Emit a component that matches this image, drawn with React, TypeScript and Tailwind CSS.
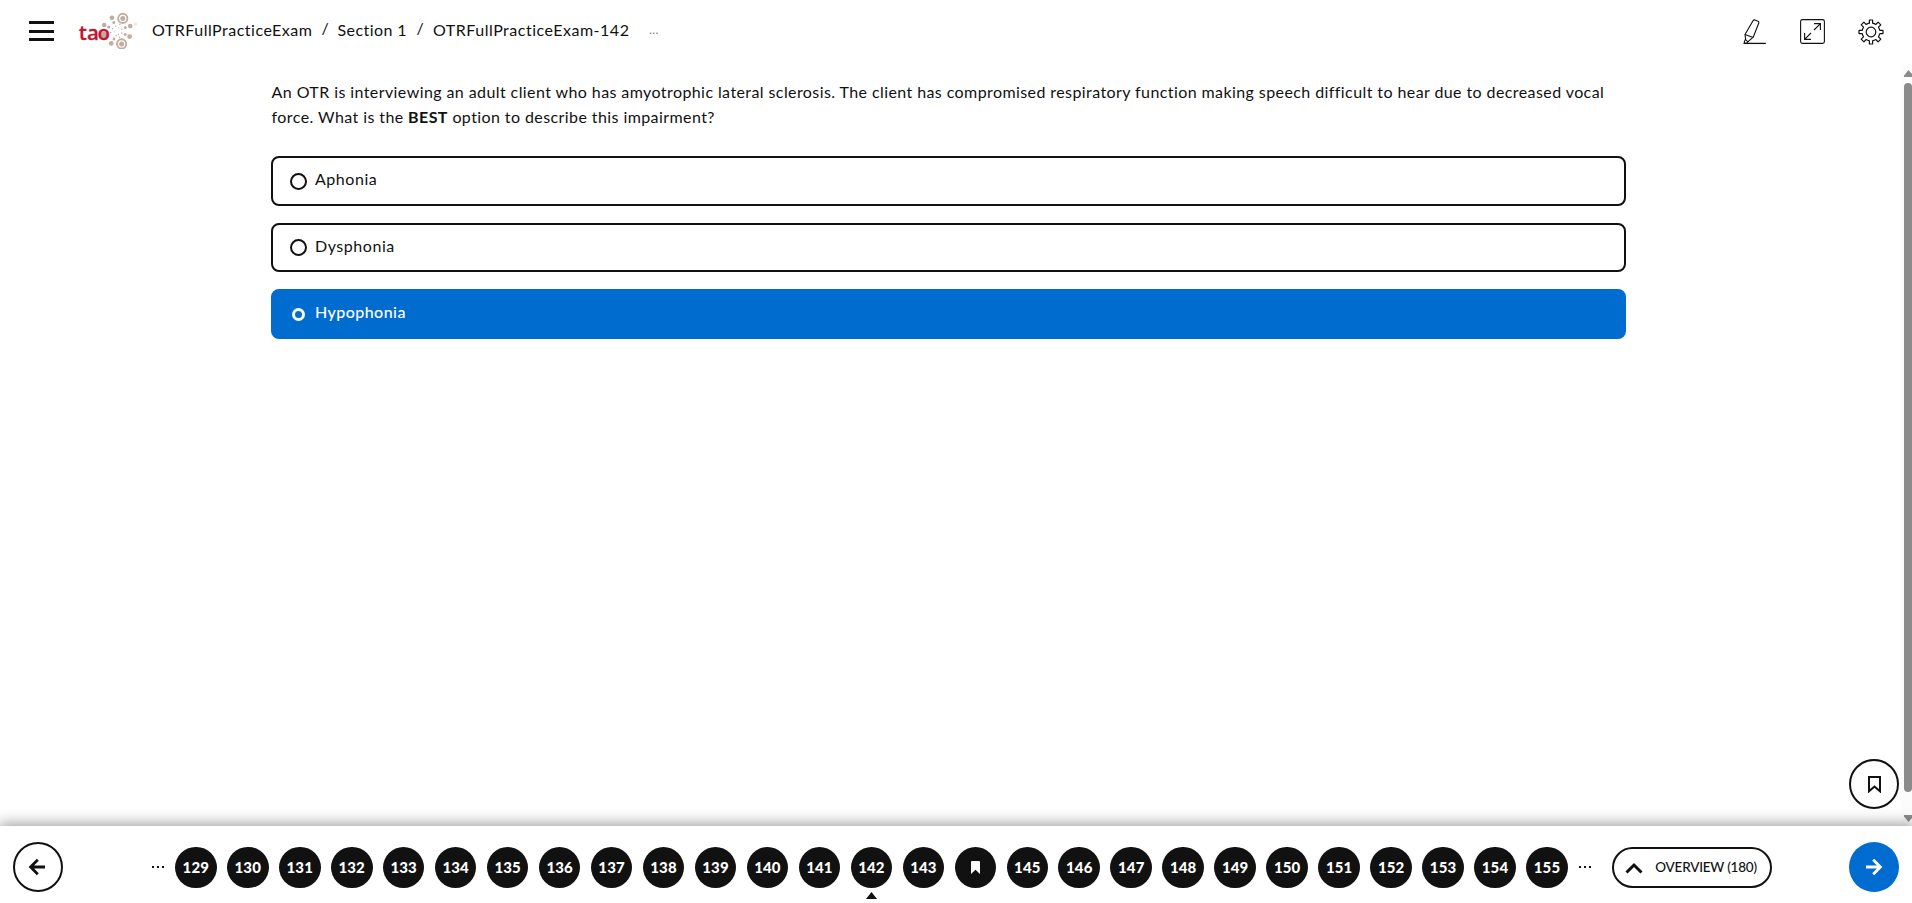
const INK = '#111111';

function Logo() {
  return (
    <svg width="60" height="40" viewBox="0 0 60 40" className="shrink-0" fill="#bfae9f">
      <g transform="translate(0.6 0)">
        <circle cx="44.2" cy="9.4" r="4.6" fill="none" stroke="#bfae9f" strokeWidth="1.9" />
        <circle cx="44.2" cy="9.4" r="2.5" />
        <circle cx="43" cy="34.9" r="4.6" fill="none" stroke="#bfae9f" strokeWidth="1.9" />
        <circle cx="43" cy="34.9" r="2.5" />
        <circle cx="33.3" cy="8.8" r="2.4" />
        <circle cx="35.2" cy="13.4" r="1.5" />
        <circle cx="37" cy="17.3" r="0.7" />
        <circle cx="25.6" cy="16" r="2.3" />
        <circle cx="30.1" cy="18" r="1.6" />
        <circle cx="34" cy="19.8" r="0.8" />
        <circle cx="51.6" cy="17.1" r="2.3" />
        <circle cx="46.7" cy="18.6" r="1.5" />
        <circle cx="43" cy="20.2" r="0.8" />
        <circle cx="56.8" cy="15" r="1.1" fill="none" stroke="#d8cec5" strokeWidth="0.7" />
        <circle cx="51" cy="27.6" r="2.4" />
        <circle cx="46.6" cy="25.6" r="1.5" />
        <circle cx="43.2" cy="24" r="0.8" />
        <circle cx="32.6" cy="34.4" r="2.3" />
        <circle cx="35.4" cy="30" r="1.4" />
        <circle cx="37.5" cy="26.7" r="0.8" />
        <circle cx="41.2" cy="15.3" r="0.8" />
        <circle cx="40.2" cy="18.8" r="0.6" />
        <circle cx="40.8" cy="28.3" r="0.8" />
        <circle cx="40" cy="25.3" r="0.6" />
        <circle cx="32" cy="23.6" r="0.8" />
        <circle cx="35.5" cy="22.8" r="0.6" />
        <circle cx="25.2" cy="26.2" r="3.4" />
      </g>
      <text y="31.4" fill="#c2132f" fontFamily="'Open Sans', sans-serif" fontWeight="600" fontSize="20.5" stroke="#c2132f" strokeWidth="0.3">
        <tspan x="0.7">t</tspan>
        <tspan x="9">a</tspan>
        <tspan x="19.6">o</tspan>
      </text>
    </svg>
  );
}

function Highlighter() {
  return (
    <svg width="24" height="26" viewBox="0 0 24 26" fill="none" stroke={INK} strokeWidth="1.1" strokeLinejoin="round">
      <path d="M10 1.7Q10.7 .6 11.9 1L15 2.2Q16.2 2.8 15.8 4L10.2 18.2L6.2 21.7L3.4 24.4H1.4V22.4L2.6 20L2 15.6Z" />
      <path d="M2 15.6L10.2 18.6M2.4 20.4L4.8 22.8" />
      <path d="M0.6 24.4H22.8" strokeWidth="1.3" />
    </svg>
  );
}

function Expand() {
  return (
    <svg width="25" height="25" viewBox="0 0 25 25" fill="none" stroke={INK} strokeWidth="1.1">
      <rect x="0.6" y="0.6" width="23.8" height="23.8" rx="1.8" />
      <path d="M14 11L20.2 4.8M14 4.6H20.4V11M11 14L4.8 20.2M4.6 14V20.4H11" />
    </svg>
  );
}

function Gear() {
  return (
    <svg width="26" height="26" viewBox="-13 -13 26 26" fill="none" stroke={INK} strokeWidth="1.2" strokeLinejoin="round">
      <path d="M-1.6 -12H1.6V-8.8Q3.4 -8.4 4.8 -7.5L7.1 -9.8L9.8 -7.1L7.5 -4.8Q8.4 -3.4 8.8 -1.6H12V1.6H8.8Q8.4 3.4 7.5 4.8L9.8 7.1L7.1 9.8L4.8 7.5Q3.4 8.4 1.6 8.8V12H-1.6V8.8Q-3.4 8.4 -4.8 7.5L-7.1 9.8L-9.8 7.1L-7.5 4.8Q-8.4 3.4 -8.8 1.6H-12V-1.6H-8.8Q-8.4 -3.4 -7.5 -4.8L-9.8 -7.1L-7.1 -9.8L-4.8 -7.5Q-3.4 -8.4 -1.6 -8.8Z" />
      <circle r="4.8" />
    </svg>
  );
}

function Arrow({ flip, color }: { flip?: boolean; color: string }) {
  return (
    <svg width="18" height="18" viewBox="0 0 18 18" fill="none" stroke={color} strokeWidth="2.8" className={flip ? 'mr-[2px] rotate-180' : ''}>
      <path d="M1 9H15.5M8.2 1.8L15.4 9L8.2 16.2" />
    </svg>
  );
}

function Option({ label, selected }: { label: string; selected?: boolean }) {
  return (
    <div
      className={
        'flex h-[49.6px] items-center rounded-lg border-2 pl-[17px] ' +
        (selected ? 'border-[#006ccf] bg-[#006ccf] text-white' : 'border-[#111111] bg-white')
      }
    >
      <span className="mt-[0.5px] flex w-[17px] justify-center">
        <span className={selected ? 'size-[13px] rounded-full border-[3.5px] border-white' : 'size-[17px] rounded-full border-2 border-[#111111]'} />
      </span>
      <span className={'-mt-[3px] ml-2 ' + (selected ? 'font-medium tracking-[0.45px]' : 'tracking-[0.55px]')}>{label}</span>
    </div>
  );
}

const numbers = Array.from({ length: 27 }, (_, i) => 129 + i);

export default function App() {
  return (
    <div className="flex h-[903px] w-[1912px] flex-col overflow-hidden bg-white font-['Lato',sans-serif] text-base text-[#111111]">
      <header className="flex h-[65px] shrink-0 items-start pr-[28px] pl-[29px]">
        <div className="mt-[21px] flex w-[25px] flex-col gap-[5.5px]">
          <span className="h-[3px] bg-[#111111]" />
          <span className="h-[3px] bg-[#111111]" />
          <span className="h-[3px] bg-[#111111]" />
        </div>
        <div className="mt-[9px] ml-[24px]">
          <Logo />
        </div>
        <nav className="mt-[17px] ml-[14px] flex leading-[25px] whitespace-nowrap">
          <span className="w-[169.5px] tracking-[0.5px]">OTRFullPracticeExam</span>
          <span className="-mt-[2px] w-4">/</span>
          <span className="w-[79px] tracking-[0.42px]">Section 1</span>
          <span className="-mt-[2px] w-[16.5px]">/</span>
          <span className="w-[216px] tracking-[0.51px]">OTRFullPracticeExam-142</span>
          <span className="mt-[5px] text-xs tracking-[0.4px] text-[#777777]">...</span>
        </nav>
        <div className="mt-[19px] ml-auto flex gap-[33px]">
          <Highlighter />
          <Expand />
          <Gear />
        </div>
      </header>

      <div className="relative flex min-h-0 flex-1">
        <main className="flex-1 pr-[275px] pl-[271px]">
          <p className="pt-[14px] pl-[0.6px] leading-[25px] tracking-[0.412px] whitespace-nowrap">
            An OTR is interviewing an adult client who has amyotrophic lateral sclerosis. The client has compromised respiratory function making speech difficult to hear due to decreased vocal
            <br />
            force. What is the <strong className="font-bold">BEST</strong> option to describe this impairment?
          </p>
          <div className="mt-[27px] flex flex-col gap-[17px]">
            <Option label="Aphonia" />
            <Option label="Dysphonia" />
            <Option label="Hypophonia" selected />
          </div>
        </main>
        <div className="flex w-[11px] flex-col items-end bg-[#fcfcfc] pt-[5px] pb-[4px]">
          <svg width="8" height="7" viewBox="0 0 8 7" fill="#8b8b8b"><path d="M0 7V5.5L4.5 0L8 4V7Z" /></svg>
          <div className="mt-[6px] h-[709px] w-2 rounded-full bg-[#8b8b8b]" />
          <svg width="8" height="7" viewBox="0 0 8 7" fill="#8b8b8b" className="mt-auto"><path d="M0 0V1.5L4.5 7L8 3V0Z" /></svg>
        </div>
        <button className="absolute right-[13px] bottom-[17px] flex size-[50px] items-center justify-center rounded-full border-2 border-[#111111] bg-white">
          <svg width="13" height="17" viewBox="0 0 13 17" fill="none" stroke={INK} strokeWidth="2"><path d="M1 1H12V15.3L6.5 10.5L1 15.3Z" /></svg>
        </button>
      </div>

      <footer className="relative flex h-[77px] shrink-0 items-start bg-white pt-4 pl-[13px] shadow-[0_0_14px_2px_rgba(0,0,0,0.4)]">
        <button className="flex size-[50px] items-center justify-center rounded-full border-2 border-[#111111]">
          <Arrow flip color={INK} />
        </button>
        <div className="mt-[5px] ml-[89px] flex h-[41px] items-center">
          <Dots />
          <div className="ml-[11px] flex gap-[10.38px]">
            {numbers.map((n) => (
              <div key={n} className="relative flex h-[41px] w-[41.6px] items-center justify-center rounded-full bg-[#111111] pb-px text-[15px] font-black tracking-[0.1px] text-white">
                {n === 144 ? (
                  <svg width="9" height="13" viewBox="0 0 9 13" fill="white"><path d="M0 1Q0 0 1 0H8Q9 0 9 1V13L4.5 8.8L0 13Z" /></svg>
                ) : (
                  n
                )}
                {n === 142 && (
                  <svg width="11" height="7" viewBox="0 0 11 7" fill={INK} className="absolute top-[45px] left-[15px]"><path d="M5.5 0L11 7H0Z" /></svg>
                )}
              </div>
            ))}
          </div>
          <div className="ml-[11px]"><Dots /></div>
        </div>
        <button className="mt-[5px] ml-[21.5px] flex h-[41px] w-[160px] items-center rounded-full border-2 border-[#111111] pl-[11px]">
          <svg width="18" height="12" viewBox="0 0 18 12" fill="none" stroke={INK} strokeWidth="3"><path d="M1.5 10.5L9 3L16.5 10.5" /></svg>
          <span className="ml-3 text-[13.5px] font-medium tracking-[-0.22px] whitespace-nowrap">OVERVIEW (180)</span>
        </button>
        <button className="mr-[13px] ml-auto flex size-[50px] items-center justify-center rounded-full bg-[#006ccf]">
          <Arrow color="white" />
        </button>
      </footer>
    </div>
  );
}

function Dots() {
  return (
    <div className="-mt-[2px] flex w-[12px] justify-between">
      <span className="size-[2px] bg-[#111111]" />
      <span className="size-[2px] bg-[#111111]" />
      <span className="size-[2px] bg-[#111111]" />
    </div>
  );
}
